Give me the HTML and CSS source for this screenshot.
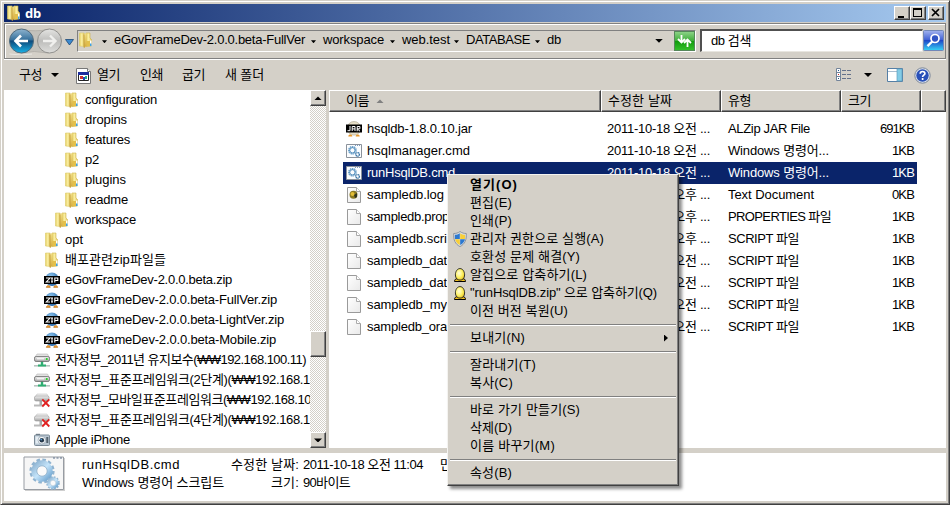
FILE: index.html
```html
<!DOCTYPE html>
<html lang="ko">
<head>
<meta charset="utf-8">
<title>db</title>
<link rel="stylesheet" href="styles.css">
</head>
<body>
<svg class="defs" width="0" height="0" aria-hidden="true">
  <defs>
    <linearGradient id="gold" x1="0" x2="1"><stop offset="0" stop-color="#e6d062"/><stop offset=".5" stop-color="#fbf0a6"/><stop offset="1" stop-color="#dcbf52"/></linearGradient>
    <linearGradient id="gold2" x1="0" x2="0" y1="0" y2="1"><stop offset="0" stop-color="#f2e08a"/><stop offset="1" stop-color="#d3a93a"/></linearGradient>
    <radialGradient id="ball" cx=".4" cy=".3" r=".7"><stop offset="0" stop-color="#8fc8f2"/><stop offset="1" stop-color="#2766a5"/></radialGradient>
    <radialGradient id="egg" cx=".4" cy=".4" r=".7"><stop offset="0" stop-color="#fffde0"/><stop offset=".5" stop-color="#fdf36a"/><stop offset="1" stop-color="#e6bd10"/></radialGradient>
    <linearGradient id="navBlue" x1="0" y1="0" x2="0" y2="1"><stop offset="0" stop-color="#8fb4cf"/><stop offset=".45" stop-color="#37719c"/><stop offset=".5" stop-color="#0e4a7b"/><stop offset="1" stop-color="#19b3e8"/></linearGradient>
    <linearGradient id="navGray" x1="0" y1="0" x2="0" y2="1"><stop offset="0" stop-color="#e4e4e2"/><stop offset=".5" stop-color="#bdbdbb"/><stop offset="1" stop-color="#dededc"/></linearGradient>
    <linearGradient id="green" x1="0" y1="0" x2="0" y2="1"><stop offset="0" stop-color="#8fd48a"/><stop offset=".48" stop-color="#3fae3a"/><stop offset=".5" stop-color="#109a0c"/><stop offset="1" stop-color="#35c22b"/></linearGradient>
    <linearGradient id="blue" x1="0" y1="0" x2="0" y2="1"><stop offset="0" stop-color="#a3b4ee"/><stop offset=".48" stop-color="#3d5fd4"/><stop offset=".5" stop-color="#1c48c8"/><stop offset="1" stop-color="#37d5f5"/></linearGradient>
    <linearGradient id="drive" x1="0" y1="0" x2="0" y2="1"><stop offset="0" stop-color="#f2f2f2"/><stop offset="1" stop-color="#a2a2a2"/></linearGradient>
    <linearGradient id="gear" x1="0" y1="0" x2="1" y2="1"><stop offset="0" stop-color="#8fb4d2"/><stop offset=".5" stop-color="#c4e4fa"/><stop offset="1" stop-color="#6fa4cf"/></linearGradient>
    <linearGradient id="paper" x1="0" y1="0" x2="1" y2="1"><stop offset="0" stop-color="#fff"/><stop offset="1" stop-color="#e9e9e9"/></linearGradient>

    <symbol id="folder" viewBox="0 0 14 16">
      <path d="M.5 1H5.200V14.500L.5 14z" fill="url(#gold)" stroke="#dccb6c" stroke-width=".6"/>
      <path d="M7 1h4v5l1.500 1.500V14L7 14.600z" fill="url(#gold)" stroke="#cfb24a" stroke-width=".6"/>
      <path d="M7 9h4v5l-4 .6z" fill="#e2bf4c"/>
      <path d="M5 2.500 7.500.800V13.500L5.500 15.800 5 15.500z" fill="url(#gold2)"/>
      <path d="M5 2.500V15.500" stroke="#c19a37" stroke-width=".8"/>
      <path d="M11 8.500h1.500V14H11z" fill="#fff"/><path d="M11 11.500h1.500V14H11z" fill="#3aa0e8"/>
    </symbol>
    <symbol id="zip" viewBox="0 0 16 16">
      <circle cx="8" cy="7.300" r="6.800" fill="url(#ball)"/>
      <path d="M2.300 15.500c0-2.600 4-2.600 4 0zM9.700 15.500c0-2.600 4-2.600 4 0z" fill="#e8982a" stroke="#a35c10" stroke-width=".4"/>
      <path d="M0 4h16v8H0z"/>
      <path d="M2 6h4L2.300 10H6M8 5.600v4.800M7 6h2M7 10h2M10.800 10.500V6h3v2.500h-3" fill="none" stroke="#fff" stroke-width="1.100"/>
    </symbol>
    <symbol id="jar" viewBox="0 0 16 16">
      <circle cx="8" cy="7.300" r="6.800" fill="#e7dfc8" stroke="#aaa28c" stroke-width=".6"/>
      <path d="M2.300 15.500c0-2.600 4-2.600 4 0zM9.700 15.500c0-2.600 4-2.600 4 0z" fill="#e8982a"/>
      <path d="M0 3.500h16v8H0z"/>
      <path d="M4 5v4.700H1.500M6.200 10V5.500H9V10M6.200 7.900H9M11.200 10.200V5.500h2.700v2.300h-2.700l2.800 2.400" fill="none" stroke="#fff" stroke-width="1"/>
    </symbol>
    <symbol id="net" viewBox="0 0 16 16">
      <path d="M0 13h16v1.600H0z" fill="#b8c4c0"/><path d="M4 12.500h8v2H4zM6.800 9h2.400v4H6.800z" fill="#2fae72"/>
      <path d="M3 2h10.500L15.500 6H.5z" fill="#e3e3e3" stroke="#aaa" stroke-width=".5"/>
      <rect x=".5" y="4.500" width="15" height="5" rx="1.600" fill="url(#drive)" stroke="#6d6d6d" stroke-width=".8"/>
      <path d="M3 6.800h7" stroke="#fff"/><circle cx="12.800" cy="7" r="1" fill="#18d418"/>
    </symbol>
    <symbol id="netx" viewBox="0 0 16 16">
      <path d="M0 12.500h9v2H0z" fill="#b9b9b9"/><path d="M5.500 9H8v4H5.500z" fill="#aaa"/>
      <path d="M3 2h10L15 6H.5z" fill="#ededed" stroke="#bbb" stroke-width=".5"/>
      <rect x=".5" y="4" width="14.500" height="5" rx="1.600" fill="url(#drive)" stroke="#999" stroke-width=".6"/>
      <path d="m8.300 7.300 7 7.200M15.300 7.300l-7 7.200" stroke="#e02020" stroke-width="1.800"/>
    </symbol>
    <symbol id="camera" viewBox="0 0 16 16">
      <rect x=".5" y="3" width="15" height="10.500" rx="1" fill="#b8c6d2" stroke="#7b8a97"/>
      <path d="M2 1.800h4V3H2z" fill="#6f7d88"/><path d="M1.500 4.500H5v7H1.500z" fill="#e4edf3"/>
      <circle cx="7.800" cy="8.200" r="3.800" fill="#f5f8fa" stroke="#8695a2" stroke-width=".6"/><circle cx="7.800" cy="8.200" r="2.300" fill="#26384a"/><circle cx="7.200" cy="7.600" r=".8" fill="#55a9e8"/>
      <path d="M12.300 5h2v6h-2z" fill="#53616c"/>
    </symbol>
    <symbol id="cog" viewBox="-10 -10 20 20">
      <circle r="8.400" fill="none" stroke="#8fb3d0" stroke-width="2.600" stroke-dasharray="2.600 1.800"/>
      <circle r="6" fill="none" stroke="url(#gear)" stroke-width="4.400"/>
      <circle r="4" fill="#fafafa" stroke="#8badc8" stroke-width=".6"/>
    </symbol>
    <symbol id="cmd" viewBox="0 0 16 14">
      <path d="M.5.500h15v13H.5z" fill="#fbfdff" stroke="#8b929b"/><path d="M9 1.500h5" stroke="#7f9cc0" stroke-dasharray="1 1"/>
      <circle cx="6.400" cy="6.300" r="3.400" fill="none" stroke="#6fa3cb" stroke-width="2" stroke-dasharray="1.300 .6"/>
      <circle cx="6.400" cy="6.300" r="2.600" fill="none" stroke="#4c88b8" stroke-width=".8"/>
      <circle cx="11.600" cy="10.400" r="1.800" fill="#fff" stroke="#3e77a8" stroke-width="1.400" stroke-dasharray="1.200 .4"/>
    </symbol>
    <symbol id="doc" viewBox="0 0 14 16">
      <path d="M.5.500h9l4 4v11H.5z" fill="url(#paper)" stroke="#9a9a9a"/><path d="M9.500.500v4h4" fill="#fff" stroke="#aaa"/>
    </symbol>
    <symbol id="log" viewBox="0 0 14 16">
      <use href="#doc"/><circle cx="6.500" cy="7.800" r="4" fill="#8b7a24"/><circle cx="5.500" cy="7" r="2" fill="#e3bd35"/><path d="M7 8l3-2v4l-2 1z" fill="#2e331d"/>
    </symbol>
    <symbol id="shield" viewBox="0 0 14 16">
      <path d="M7 .5c2 1.500 4 2 6.300 2C13.600 9 12 13 7 15.600 2 13 .4 9 .7 2.500 3 2.500 5 2 7 .5z" fill="#d9dee4" stroke="#7d8791" stroke-width=".8"/>
      <path d="M6.800 2.200V8H2C1.800 6.500 1.800 5 1.900 3.800c1.900 0 3.400-.6 4.900-1.600z" fill="#2c78cf"/>
      <path d="M7.200 2.200V8H12c.2-1.500.2-3 .1-4.200-1.900 0-3.400-.6-4.900-1.600z" fill="#f8cf38"/>
      <path d="M2 8.300h4.800v5.800C4.200 12.600 2.600 11 2 8.300z" fill="#f8cf38"/><path d="M12 8.300H7.200v5.800c2.600-1.500 4.200-3.100 4.800-5.800z" fill="#2c78cf"/>
    </symbol>
    <symbol id="eggicon" viewBox="0 0 12 14">
      <path d="M.5 13.500c0-2 1.300-2.800 2.500-2.800h6c1.300 0 2.500.8 2.500 2.800z" fill="#f0c020" stroke="#000"/>
      <path d="M6 .6c2.800 0 4.600 3 4.600 6.300 0 3.400-2 5.200-4.600 5.200S1.400 10.300 1.400 6.900C1.400 3.600 3.200.6 6 .6z" fill="url(#egg)" stroke="#222" stroke-width=".9"/>
    </symbol>
  </defs>
</svg>

<div class="window">
  <header class="titlebar">
    <svg class="i-folder"><use href="#folder"/></svg>
    <b data-w="16">db</b>
    <span class="winbtn push"><svg width="14" height="12"><path d="M3 9h6v2H3z"/></svg></span>
    <span class="winbtn"><svg width="14" height="12"><path d="M2 1h9v9H2zM3 3v6h7V3z" fill-rule="evenodd"/></svg></span>
    <span class="winbtn close"><svg width="14" height="12"><path d="m3 2 7 7M10 2 3 9" stroke="#000" stroke-width="1.700"/></svg></span>
  </header>

  <nav class="navbar">
    <svg class="arrows" width="68" height="28" viewBox="0 0 68 28">
      <path d="M15 2.500Q30 5 42 2.500A12 12 0 0 1 42 26Q28 23 15 26z" fill="#c3c1bb" stroke="#aaa8a2" stroke-width=".7"/>
      <circle cx="15.500" cy="14" r="12" fill="url(#navBlue)" stroke="#526b7c"/>
      <path d="M3.500 27Q15 29 26 27" fill="none" stroke="#fff" opacity=".5"/>
      <path d="M9 14h13M15 8.500 9.500 14l5.500 5.500" fill="none" stroke="#fff" stroke-width="2.600"/>
      <circle cx="43.500" cy="14" r="12" fill="url(#navGray)" stroke="#92918e"/>
      <path d="M37 14h13M44 8.500l5.500 5.500-5.500 5.500" fill="none" stroke="#f0f0ee" stroke-width="2.400"/>
      <path d="M59.500 12.500h8l-4 5.500z" fill="#3d8bd0" stroke="#1c4675" stroke-width=".8"/>
    </svg>
    <div class="address">
      <svg class="i-folder"><use href="#folder"/></svg>
      <i class="tri sm a1"></i><span class="c1"><span data-w="191">eGovFrameDev-2.0.0.beta-FullVer</span></span>
      <i class="tri sm"></i><span class="c2"><span data-w="61">workspace</span></span>
      <i class="tri sm"></i><span class="c3"><span data-w="48">web.test</span></span>
      <i class="tri sm"></i><span class="c4"><span data-w="64">DATABASE</span></span>
      <i class="tri sm"></i><span class="c5"><span data-w="14">db</span></span>
      <i class="tri push"></i>
      <svg class="refresh" width="21" height="20"><rect x=".5" y=".5" width="20" height="19" fill="url(#green)" stroke="#55875a"/><path d="M7.500 4v6M4 8l3.500 3.500L11 8M13.500 16v-6M10 12l3.500-3.500L17 12" fill="none" stroke="#fff" stroke-width="1.800"/></svg>
    </div>
    <div class="search"><span data-w="40">db 검색</span></div>
    <svg width="21" height="21"><rect x=".5" y=".5" width="20" height="20" rx="1" fill="url(#blue)" stroke="#7187b8"/><circle cx="12" cy="8.500" r="4" fill="#3155c4" stroke="#fff" stroke-width="1.700"/><path d="m9.200 11.500-4.700 4.700" stroke="#fff" stroke-width="2.400"/></svg>
  </nav>

  <div class="commands">
    <span class="m1"><span data-w="23">구성</span></span><i class="tri"></i>
    <svg class="app" width="15" height="17" viewBox="0 0 15 17"><path d="M.5 1.500h11l3 3v12H.5z" fill="#fff" stroke="#777"/><path d="M11.500 1.500v3h3" fill="#fff" stroke="#777"/><path d="M2.500 5.500h10v8h-10z" fill="#fff" stroke="#222"/><path d="M2 5h11v3H2z" fill="#1c2c9c"/><path d="M4 9h3v3H4z" fill="#c33"/><path d="M7 10h2v3H7z" fill="#24b"/><path d="M9 9h2v3H9z" fill="#2a8"/></svg>
    <span class="m2"><span data-w="23">열기</span></span>
    <span class="m3"><span data-w="23">인쇄</span></span>
    <span class="m4"><span data-w="23">굽기</span></span>
    <span><span data-w="39">새 폴더</span></span>
    <svg class="push" width="16" height="14" viewBox="0 0 16 14"><path d="M.5.500h4v12h-4zM.5 4.500h4M.5 8.500h4" fill="#fff" stroke="#73849a"/><path d="M2 2h1v1H2zM2 10h1v1H2z" fill="#258"/><path d="M2 6h1v1H2z" fill="#c22"/><path d="M6 2.500h4M11 2.500h4M6 6.500h4M11 6.500h4M6 10.500h4M11 10.500h4" stroke="#63718a"/></svg>
    <i class="tri v"></i>
    <svg class="pane" width="16" height="14"><path d="M.5.500h15v13H.5z" fill="#fff" stroke="#557fa5"/><path d="M1 3h9v1H1z" fill="#a8bdd0"/><path d="M10 1h5v12h-5z" fill="#83cce6" stroke="#5e9dbd" stroke-width=".7"/></svg>
    <svg class="help" width="17" height="17"><circle cx="8.500" cy="8.500" r="7.700" fill="#dce3ee" stroke="#7c8798"/><circle cx="8.500" cy="8.500" r="6.200" fill="#2950b8"/><path d="M6.200 6.800c0-3 4.700-3 4.700-.3 0 1.700-2.300 1.700-2.300 3.500M8.600 11v2" fill="none" stroke="#fff" stroke-width="1.700"/></svg>
  </div>

  <main class="content">
    <ul class="tree">
      <li class="l3"><svg class="i-folder"><use href="#folder"/></svg><span data-w="72">configuration</span></li>
      <li class="l3"><svg class="i-folder"><use href="#folder"/></svg><span data-w="42">dropins</span></li>
      <li class="l3"><svg class="i-folder"><use href="#folder"/></svg><span data-w="45">features</span></li>
      <li class="l3"><svg class="i-folder"><use href="#folder"/></svg><span data-w="14">p2</span></li>
      <li class="l3"><svg class="i-folder"><use href="#folder"/></svg><span data-w="41">plugins</span></li>
      <li class="l3"><svg class="i-folder"><use href="#folder"/></svg><span data-w="43">readme</span></li>
      <li class="l2"><svg class="i-folder"><use href="#folder"/></svg><span data-w="61">workspace</span></li>
      <li class="l1"><svg class="i-folder"><use href="#folder"/></svg><span data-w="18">opt</span></li>
      <li class="l1"><svg class="i-folder"><use href="#folder"/></svg><span data-w="101">배포관련zip파일들</span></li>
      <li class="l1"><svg class="i-16"><use href="#zip"/></svg><span data-w="167">eGovFrameDev-2.0.0.beta.zip</span></li>
      <li class="l1"><svg class="i-16"><use href="#zip"/></svg><span data-w="212">eGovFrameDev-2.0.0.beta-FullVer.zip</span></li>
      <li class="l1"><svg class="i-16"><use href="#zip"/></svg><span data-w="219">eGovFrameDev-2.0.0.beta-LightVer.zip</span></li>
      <li class="l1"><svg class="i-16"><use href="#zip"/></svg><span data-w="211">eGovFrameDev-2.0.0.beta-Mobile.zip</span></li>
      <li class="l0"><svg class="i-16"><use href="#net"/></svg><span data-w="251">전자정부_2011년 유지보수(₩₩192.168.100.11)</span></li>
      <li class="l0"><svg class="i-16"><use href="#net"/></svg><span data-w="255">전자정부_표준프레임워크(2단계)(₩₩192.168.1</span></li>
      <li class="l0"><svg class="i-16"><use href="#netx"/></svg><span data-w="256">전자정부_모바일표준프레임워크(₩₩192.168.10</span></li>
      <li class="l0"><svg class="i-16"><use href="#netx"/></svg><span data-w="255">전자정부_표준프레임워크(4단계)(₩₩192.168.1</span></li>
      <li class="l0"><svg class="i-16"><use href="#camera"/></svg><span data-w="75">Apple iPhone</span></li>
    </ul>
    <div class="scrollbar">
      <span class="raised sbtn"><i class="tri up"></i></span>
      <span class="raised thumb"></span>
      <span class="raised sbtn end"><i class="tri"></i></span>
    </div>
    <section class="files">
      <div class="cols">
        <span class="h"><span data-w="23">이름</span><i class="tri up gray"></i></span>
        <span class="h"><span data-w="64">수정한 날짜</span></span>
        <span class="h"><span data-w="23">유형</span></span>
        <span class="h"><span data-w="23">크기</span></span>
        <span class="h"></span>
      </div>
      <div class="row"><svg class="i-16"><use href="#jar"/></svg><span><span data-w="105">hsqldb-1.8.0.10.jar</span></span><span><span data-w="103">2011-10-18 오전 ...</span></span><span><span data-w="82">ALZip JAR File</span></span><span data-w="34">691KB</span></div>
      <div class="row"><svg class="i-cmd"><use href="#cmd"/></svg><span><span data-w="103">hsqlmanager.cmd</span></span><span><span data-w="103">2011-10-18 오전 ...</span></span><span><span data-w="101">Windows 명령어...</span></span><span data-w="22">1KB</span></div>
      <div class="row selected"><svg class="i-cmd"><use href="#cmd"/></svg><span><span data-w="88">runHsqlDB.cmd</span></span><span><span data-w="103">2011-10-18 오전 ...</span></span><span><span data-w="101">Windows 명령어...</span></span><span data-w="22">1KB</span></div>
      <div class="row"><svg class="i-doc"><use href="#log"/></svg><span><span data-w="77">sampledb.log</span></span><span><span data-w="103">2011-10-18 오후 ...</span></span><span><span data-w="86">Text Document</span></span><span data-w="22">0KB</span></div>
      <div class="row"><svg class="i-doc"><use href="#doc"/></svg><span><span data-w="82">sampledb.prop</span></span><span><span data-w="103">2011-10-18 오후 ...</span></span><span><span data-w="103">PROPERTIES 파일</span></span><span data-w="22">1KB</span></div>
      <div class="row"><svg class="i-doc"><use href="#doc"/></svg><span><span data-w="80">sampledb.scri</span></span><span><span data-w="103">2011-10-18 오후 ...</span></span><span><span data-w="71">SCRIPT 파일</span></span><span data-w="22">1KB</span></div>
      <div class="row"><svg class="i-doc"><use href="#doc"/></svg><span><span data-w="80">sampledb_dat</span></span><span><span data-w="103">2011-10-18 오전 ...</span></span><span><span data-w="71">SCRIPT 파일</span></span><span data-w="22">1KB</span></div>
      <div class="row"><svg class="i-doc"><use href="#doc"/></svg><span><span data-w="80">sampledb_dat</span></span><span><span data-w="103">2011-10-18 오전 ...</span></span><span><span data-w="71">SCRIPT 파일</span></span><span data-w="22">1KB</span></div>
      <div class="row"><svg class="i-doc"><use href="#doc"/></svg><span><span data-w="80">sampledb_my</span></span><span><span data-w="103">2011-10-18 오전 ...</span></span><span><span data-w="71">SCRIPT 파일</span></span><span data-w="22">1KB</span></div>
      <div class="row"><svg class="i-doc"><use href="#doc"/></svg><span><span data-w="80">sampledb_ora</span></span><span><span data-w="103">2011-10-18 오전 ...</span></span><span><span data-w="71">SCRIPT 파일</span></span><span data-w="22">1KB</span></div>
    </section>
  </main>

  <footer class="details">
    <svg width="43" height="36" viewBox="0 0 43 36">
      <path d="M2 2h40v33H2z" fill="#cfcfcf"/><path d="M1 1h39.500v32.500H1z" fill="#f6f6f6" stroke="#979ca3"/>
      <path d="M30 2h9" stroke="#5b6f88" stroke-dasharray="2 1.500"/>
      <use href="#cog" x="6" y="2" width="26" height="26"/><use href="#cog" x="23" y="20" width="14" height="14"/>
    </svg>
    <div class="d1"><span><span data-w="98">runHsqlDB.cmd</span></span><span><span data-w="142">Windows 명령어 스크립트</span></span></div>
    <div class="d2"><span><span data-w="68">수정한 날짜:</span></span><span><span data-w="28">크기:</span></span></div>
    <div class="d3"><span><span data-w="120">2011-10-18 오전 11:04</span></span><span><span data-w="47">90바이트</span></span></div>
    <div class="d4"><span>만</span></div>
  </footer>
</div>

<ul class="menu">
  <li><b data-w="48">열기(O)</b></li>
  <li><span data-w="42">편집(E)</span></li>
  <li><span data-w="42">인쇄(P)</span></li>
  <li><svg class="i-shield"><use href="#shield"/></svg><span data-w="134">관리자 권한으로 실행(A)</span></li>
  <li><span data-w="110">호환성 문제 해결(Y)</span></li>
  <li><svg class="i-egg"><use href="#eggicon"/></svg><span data-w="117">알집으로 압축하기(L)</span></li>
  <li><svg class="i-egg"><use href="#eggicon"/></svg><span data-w="187">"runHsqlDB.zip" 으로 압축하기(Q)</span></li>
  <li><span data-w="98">이전 버전 복원(U)</span></li>
  <li class="sep"></li>
  <li><span data-w="55">보내기(N)</span><i class="tri right"></i></li>
  <li class="sep"></li>
  <li><span data-w="66">잘라내기(T)</span></li>
  <li><span data-w="43">복사(C)</span></li>
  <li class="sep"></li>
  <li><span data-w="110">바로 가기 만들기(S)</span></li>
  <li><span data-w="42">삭제(D)</span></li>
  <li><span data-w="85">이름 바꾸기(M)</span></li>
  <li class="sep"></li>
  <li><span data-w="42">속성(B)</span></li>
</ul>
<script src="fit.js"></script>
</body>
</html>
```
FILE: styles.css
```css
* { box-sizing: border-box; }
body {
  margin: 0;
  width: 950px;
  height: 505px;
  overflow: hidden;
  position: relative;
  background: #d4d0c8;
  color: #000;
  font: 13px/18px "Liberation Sans", "Noto Sans CJK KR", sans-serif;
  white-space: nowrap;
}
ul { list-style: none; margin: 0; padding: 0; }
svg { flex: none; display: block; }
.defs { height: 0; }
.push { margin-left: auto; }
[data-w] { flex: none; }

.i-folder { width: 14px; height: 16px; }
.i-16 { width: 16px; height: 16px; }
.i-cmd { width: 16px; height: 14px; }
.i-doc { width: 14px; height: 16px; margin: 0 1px; }

.tri {
  flex: none;
  width: 8px;
  height: 4px;
  background: #000;
  clip-path: polygon(0 0, 100% 0, 50% 100%);
}
.tri.sm { width: 5px; height: 3px; margin-top: 2px; }
.tri.up { clip-path: polygon(50% 0, 100% 100%, 0 100%); }
.tri.gray { background: #808080; margin-left: 7px; }
.tri.right { width: 4px; height: 7px; clip-path: polygon(0 0, 100% 50%, 0 100%); }

.window {
  width: 950px;
  height: 505px;
  display: flex;
  flex-direction: column;
  padding: 3px;
  border: 1px solid #d4d0c8;
  border-right-color: #404040;
  border-bottom-color: #404040;
  box-shadow: inset 1px 1px #fff, inset -1px -1px #808080;
}

.titlebar {
  height: 18px;
  display: flex;
  align-items: center;
  padding: 0 2px 0 3px;
  background: linear-gradient(90deg, #0a246a, #a6caf0);
  color: #fff;
}
.titlebar b { margin-left: 4px; font-family: "Noto Sans", sans-serif; font-size: 13px; }
.winbtn, .raised {
  background: #d4d0c8;
  border: 1px solid #fff;
  border-right-color: #404040;
  border-bottom-color: #404040;
  box-shadow: inset -1px -1px #808080;
}
.winbtn { width: 16px; height: 14px; }
.winbtn.close { margin-left: 2px; }

.navbar {
  height: 36px;
  margin-top: 1px;
  display: flex;
  align-items: center;
  border: 1px solid #808080;
  box-shadow: inset 1px 1px #fff, 0 1px #fff;
}
.arrows { margin-left: 1px; }
.address {
  width: 619px;
  height: 22px;
  margin: 0 4px 0 3px;
  display: flex;
  align-items: center;
  border: 1px solid #808080;
  border-right-color: #fff;
  border-bottom-color: #fff;
  padding-left: 1px;
}
.address .i-folder { margin-top: -2px; }
.address > span { margin-top: -2px; padding-left: 7px; flex: none; }
.a1 { margin-left: 9px; }
.c1 { width: 204px; }
.c2 { width: 74px; }
.c3 { width: 59px; }
.c4 { width: 76px; }
.c5 { width: 30px; }
.refresh { margin-left: 11px; }
.search {
  width: 223px;
  height: 23px;
  display: flex;
  align-items: center;
  padding-left: 9px;
  background: #fff;
  border: 2px solid #505050;
  border-right: 1px solid #e8e6e0;
  border-bottom: 1px solid #e8e6e0;
}

.commands {
  height: 31px;
  margin-top: 1px;
  display: flex;
  align-items: center;
  padding: 0 15px;
}
.m1 { width: 32px; }
.app { margin-left: 17px; }
.m2 { margin-left: 6px; width: 43px; }
.m3 { width: 42px; }
.m4 { width: 43px; }
.v { margin-left: 12px; }
.pane { margin-left: 15px; }
.help { margin-left: 11px; }

.content { height: 358px; display: flex; }
.tree { width: 306px; height: 358px; overflow: hidden; background: #fff; }
.tree li { height: 20px; display: flex; align-items: center; }
.tree .i-folder { margin-right: 6px; }
.tree .i-16 { margin: 0 5px 0 -1px; }
.l3 { padding-left: 61px; }
.l2 { padding-left: 51px; }
.l1 { padding-left: 41px; }
.l0 { padding-left: 31px; }
.scrollbar {
  width: 16px;
  display: flex;
  flex-direction: column;
  background: repeating-conic-gradient(#fff 0 25%, #d4d0c8 0 50%) 0 0 / 2px 2px;
}
.sbtn { height: 16px; display: flex; align-items: center; justify-content: center; }
.thumb { height: 26px; margin-top: 225px; }
.end { margin-top: auto; }

.files { width: 617px; margin-left: 3px; background: #fff; }
.cols {
  height: 22px;
  margin-bottom: 6px;
  display: grid;
  grid-template-columns: 272px 120px 120px 80px 25px;
}
.h {
  display: flex;
  align-items: center;
  padding-left: 6px;
  background: #d4d0c8;
  border: 1px solid #fff;
  border-right-color: #404040;
  border-bottom-color: #404040;
  box-shadow: inset -1px -1px #808080;
}
.h:first-child { padding-left: 16px; }
.row {
  width: 574px;
  height: 22px;
  margin-left: 14px;
  padding-left: 3px;
  display: grid;
  grid-template-columns: 21px 240px 121px 149px 37px;
  align-items: center;
}
.row > :last-child { justify-self: end; }
.selected { background: #0a246a; color: #fff; }

.details {
  height: 48px;
  margin-top: 5px;
  display: flex;
  background: #fff;
  padding: 3px 0 0 19px;
}
.details div { display: flex; flex-direction: column; line-height: 18px; }
.d1 { width: 149px; margin-left: 16px; }
.d2 { width: 68px; align-items: flex-end; }
.d3 { width: 137px; margin-left: 4px; }

.menu {
  position: absolute;
  left: 447px;
  top: 174px;
  width: 232px;
  height: 312px;
  padding: 1px 2px;
  background: #d4d0c8;
  border: 1px solid #f4f3f0;
  border-right-color: #404040;
  border-bottom-color: #404040;
  box-shadow: inset -1px -1px #808080, 3px 3px 3px rgba(0, 0, 0, .45);
}
.menu li {
  height: 18px;
  display: grid;
  grid-template-columns: 20px 1fr 12px;
  align-items: center;
}
.menu li > span, .menu li > b { grid-column: 2; justify-self: start; }
.menu .sep { height: 9px; display: block; }
.menu .sep::before {
  content: "";
  display: block;
  height: 2px;
  transform: translateY(4px);
  background: linear-gradient(#808080 50%, #fff 50%);
}
.i-shield { width: 14px; height: 16px; margin-left: 3px; }
.i-egg { width: 12px; height: 14px; margin-left: 4px; }
```
FILE: fit.js
```js
// Spreads each label's letters so that it takes its column width.
document.querySelectorAll("[data-w]").forEach((el) => {
  const range = document.createRange();
  range.selectNodeContents(el);
  const natural = range.getBoundingClientRect().width;
  el.style.letterSpacing = (Number(el.dataset.w) - natural) / el.textContent.length + "px";
});
```
